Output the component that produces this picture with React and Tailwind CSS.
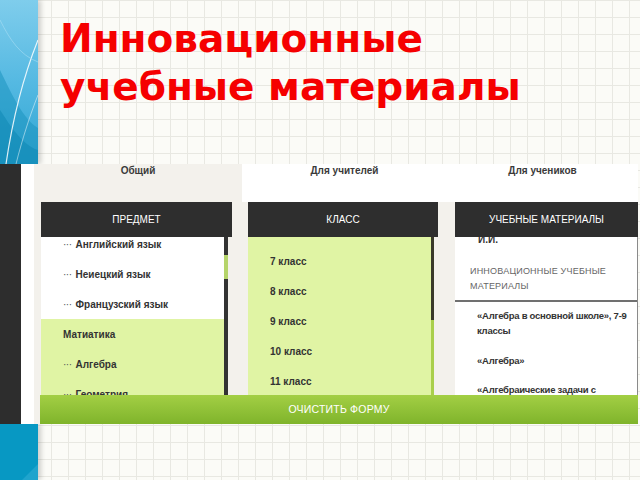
const sans = "font-['Liberation_Sans',Arial,sans-serif]";

function BlueTop() {
  return (
    <div className="w-[38px] h-[164px] shrink-0 shadow-[3px_0_5px_rgba(0,0,0,0.18)] relative z-10">
      <svg width="38" height="164" viewBox="0 0 38 164" className="block">
        <defs>
          <linearGradient id="bt" x1="0" y1="0" x2="0" y2="1">
            <stop offset="0" stopColor="#7fcdec" />
            <stop offset="0.5" stopColor="#55b9e2" />
            <stop offset="1" stopColor="#2ea5d2" />
          </linearGradient>
        </defs>
        <rect width="38" height="164" fill="url(#bt)" />
        <path d="M0 70 C12 95 24 120 38 128 L38 164 L0 164 Z" fill="#1b93bf" opacity="0.55" />
        <path d="M0 110 C10 125 22 145 38 150 L38 164 L0 164 Z" fill="#0b86b2" opacity="0.5" />
        <path d="M38 40 C26 70 14 110 6 164" stroke="#ffffff" strokeWidth="1.2" fill="none" opacity="0.85" />
        <path d="M38 95 C30 115 22 140 16 164" stroke="#ffffff" strokeWidth="0.8" fill="none" opacity="0.6" />
        <path d="M0 20 C10 40 20 55 38 62" stroke="#a6def3" strokeWidth="1" fill="none" opacity="0.6" />
      </svg>
    </div>
  );
}

function BlueBottom() {
  return (
    <div className="w-[38px] h-[56px] shrink-0 shadow-[3px_0_5px_rgba(0,0,0,0.18)]">
      <svg width="38" height="56" viewBox="0 0 38 56" className="block">
        <rect width="38" height="56" fill="#0798c3" />
        <path d="M38 40 L38 56 L22 56 Z" fill="#2aa9d2" opacity="0.7" />
      </svg>
    </div>
  );
}

function Dash() {
  return <span className="text-[#555] font-normal tracking-[-0.5px] mr-[4px]">···</span>;
}

function Screenshot() {
  return (
    <div className={`flex h-[260px] w-[638px] shrink-0 relative z-20 ${sans}`}>
      <div className="w-[21px] bg-[#2d2d2d]" />
      <div className="w-[13px] bg-white" />
      <div className="w-[604px] flex flex-col bg-[#f3f1ec]">
        {/* tabs */}
        <div className="h-[38px] flex text-[10px] font-bold text-[#3a3a3a] leading-[12px]">
          <div className="w-[208px] flex justify-center pt-[1px]">Общий</div>
          <div className="w-[205px] bg-white flex justify-center pt-[1px]">Для учителей</div>
          <div className="flex-1 bg-white flex justify-center pt-[1px]">Для учеников</div>
        </div>

        {/* columns */}
        <div className="h-[193px] flex pl-[7px]">
          {/* col 1 */}
          <div className="w-[191px] flex flex-col">
            <div className="h-[35px] bg-[#2e2e2e] text-white text-[10px] flex items-center justify-center">ПРЕДМЕТ</div>
            <div className="flex-1 flex overflow-hidden">
              <div className="w-[183px] bg-white overflow-hidden text-[10px] font-bold text-[#333]">
                <div className="-mt-[8px]">
                  <div className="h-[30px] flex items-center pl-[22px]"><Dash />Английский язык</div>
                  <div className="h-[30px] flex items-center pl-[22px]"><Dash />Неиецкий язык</div>
                  <div className="h-[30px] flex items-center pl-[22px]"><Dash />Французский язык</div>
                  <div className="bg-[#e0f4a4]">
                    <div className="h-[30px] flex items-center pl-[22px]">Матиатика</div>
                    <div className="h-[30px] flex items-center pl-[22px]"><Dash />Алгебра</div>
                    <div className="h-[30px] flex items-center pl-[22px]"><Dash />Геометрия</div>
                  </div>
                </div>
              </div>
              <div className="w-[4px] bg-[#333] flex flex-col">
                <div className="mt-[18px] h-[24px] bg-[#b5d46a]" />
              </div>
            </div>
          </div>

          {/* col 2 */}
          <div className="w-[190px] ml-[16px] flex flex-col">
            <div className="h-[35px] bg-[#2e2e2e] text-white text-[10px] flex items-center justify-center">КЛАСС</div>
            <div className="flex-1 flex overflow-hidden">
              <div className="w-[183px] bg-[#e0f4a4] text-[10px] font-bold text-[#333] pt-[9px] pl-[22px]">
                <div className="h-[30px] flex items-center">7 класс</div>
                <div className="h-[30px] flex items-center">8 класс</div>
                <div className="h-[30px] flex items-center">9 класс</div>
                <div className="h-[30px] flex items-center">10 класс</div>
                <div className="h-[30px] flex items-center">11 класс</div>
              </div>
              <div className="w-[3px] flex flex-col">
                <div className="h-[83px] bg-[#3a3a2a]" />
                <div className="flex-1 bg-[#a9cf4c]" />
              </div>
            </div>
          </div>

          {/* col 3 */}
          <div className="w-[183px] ml-[17px] flex flex-col">
            <div className="h-[35px] bg-[#2e2e2e] text-white text-[10px] flex items-center justify-center">УЧЕБНЫЕ МАТЕРИАЛЫ</div>
            <div className="flex-1 flex overflow-hidden">
              <div className="flex-1 bg-white overflow-hidden text-[10px] text-[#333] border-r border-[#8a8a8a]">
                <div className="-mt-[4px] pl-[23px] font-bold leading-[14px]">И.И.</div>
                <div className="mt-[17px] pl-[15px] leading-[15px] text-[9px] text-[#666] tracking-[0.2px]">
                  ИННОВАЦИОННЫЕ УЧЕБНЫЕ<br />МАТЕРИАЛЫ
                </div>
                <div className="mt-[6px] h-[2px] bg-[#707070]" />
                <div className="pl-[22px] font-bold text-[9.5px] tracking-[-0.25px]">
                  <div className="mt-[6px] leading-[15px]">«Алгебра в основной школе», 7-9<br />классы</div>
                  <div className="mt-[15px] leading-[15px]">«Алгебра»</div>
                  <div className="mt-[14px] leading-[15px]">«Алгебраические задачи с<br />параметрами»</div>
                </div>
              </div>
            </div>
          </div>
        </div>

        {/* button */}
        <div className="ml-[6px] h-[29px] bg-gradient-to-b from-[#a3cf44] to-[#7fb42b] text-white text-[10.5px] flex items-center justify-center tracking-[0.2px]">
          ОЧИСТИТЬ ФОРМУ
        </div>
      </div>
    </div>
  );
}

export default function App() {
  return (
    <div className="w-[640px] h-[480px] overflow-hidden flex flex-col bg-[#fbfbf7] bg-[linear-gradient(to_right,#e8e8e2_1px,transparent_1px),linear-gradient(to_bottom,#e8e8e2_1px,transparent_1px)] bg-[size:17px_17px]">
      <div className="flex h-[164px] shrink-0">
        <BlueTop />
        <div className="pl-[22px] pt-[15px]">
          <h1 className="font-['DejaVu_Sans',sans-serif] font-bold text-[39px] leading-[48px] text-[#f50000]">
            Инновационные<br />учебные материалы
          </h1>
        </div>
      </div>
      <Screenshot />
      <div className="flex flex-1">
        <BlueBottom />
      </div>
    </div>
  );
}
